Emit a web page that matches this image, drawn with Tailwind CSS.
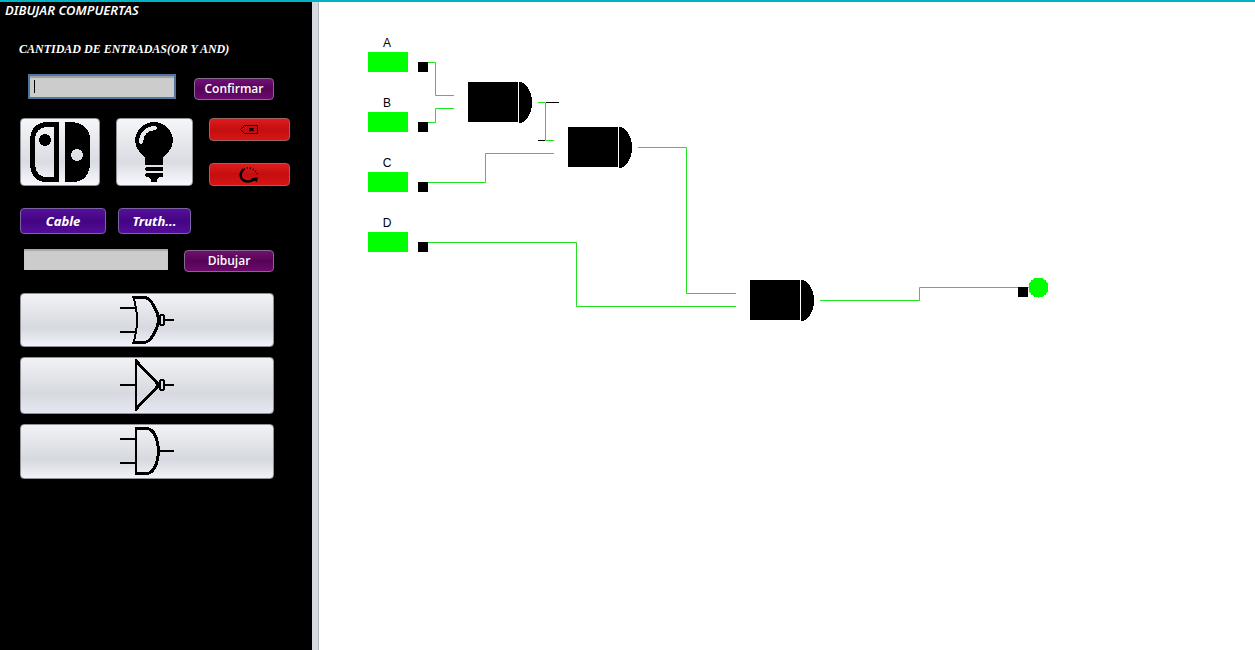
<!DOCTYPE html>
<html lang="es">
<head>
<meta charset="utf-8">
<title>Dibujar compuertas</title>
<script src="https://cdn.jsdelivr.net/npm/@tailwindcss/browser@4"></script>
</head>
<body class="flex h-screen overflow-hidden border-t-2 border-[#00b3c2] bg-white font-['Open_Sans',sans-serif]">
<aside class="w-[312px] shrink-0 bg-black pl-5 text-white">
  <h1 class="-ml-[15px] h-[17px] font-['Noto_Sans',sans-serif] text-[13px] leading-[17px] font-semibold italic">DIBUJAR COMPUERTAS</h1>
  <label for="entradas" class="mt-[22px] -ml-px block h-4 font-['Liberation_Serif',serif] text-[12px] leading-4 font-black italic whitespace-nowrap">CANTIDAD DE ENTRADAS(OR Y AND)</label>

  <div class="mt-[17px] ml-2 flex items-end gap-[18px]">
    <div class="relative mb-px">
      <input id="entradas" type="text" class="block h-[25px] w-[148px] border-2 border-[#51779f] bg-[#cccccc] px-1 text-[12px] text-black shadow-[inset_0_2px_1px_#9da0a4] outline-none">
      <span class="absolute top-[6px] left-[6px] h-[13px] w-px bg-black"></span>
    </div>
    <button class="h-[22px] w-20 rounded-[4px] border border-[#85688a] bg-linear-to-b from-[#701175] via-[#560459] to-[#6b0b70] font-['Open_Sans',sans-serif] text-[12px] leading-5 font-semibold">Confirmar</button>
  </div>

  <div class="mt-[18px] flex">
    <button aria-label="Interruptor" class="flex h-[68px] w-20 justify-center rounded-[4px] border border-[#8f9297] bg-linear-to-b from-[#f5f6f8] via-[#d9dce2] via-65% to-[#f8f9ff] pt-[3px]">
      <svg width="60" height="60" viewBox="0 0 60 60" shape-rendering="crispEdges">
        <path d="M26.500 2.500H17Q2.500 3.500 2.500 19V42Q3.500 57.500 17 57.500H26.500Z" fill="none" stroke="#000" stroke-width="5"/>
        <circle cx="15" cy="18" r="6"/>
        <path fill-rule="evenodd" d="M35 0H42Q60 2 60 18V43Q58 60 42 60H35ZM47 27a6 6 0 1 0 0 12a6 6 0 0 0 0-12Z"/>
      </svg>
    </button>
    <button aria-label="Bombilla" class="ml-4 flex h-[68px] w-[77px] justify-center rounded-[4px] border border-[#8f9297] bg-linear-to-b from-[#f5f6f8] via-[#d9dce2] via-65% to-[#f8f9ff] pt-[3px]">
      <svg width="39" height="60" viewBox="0 0 39 60" shape-rendering="crispEdges">
        <path d="M19 0A19 19 0 0 1 38 19C38 28 29 34 28 36V43H10V36C9 34 0 28 0 19A19 19 0 0 1 19 0Z"/>
        <path d="M6 20Q7 7 20 6" fill="none" stroke="#e8eaed" stroke-width="4" stroke-linecap="round"/>
        <path d="M11 45H27L28 46V48L27 49H11L10 48V46ZM11 51H27L28 52V54L27 55H24L22 58V60H16V58L14 55H11L10 54V52Z"/>
      </svg>
    </button>
    <div class="ml-4 flex w-[81px] flex-col justify-between">
      <button aria-label="Borrar" class="flex h-[23px] items-center justify-center rounded-[4px] border border-[#9b6264] bg-linear-to-b from-[#df1b1c] via-[#c40e0f] to-[#d81516]">
        <svg width="19" height="9" viewBox="0 0 19 9" fill="none" stroke="#000">
          <path d="M4.500 .5H17.500V8.500H4.500L.5 4.500Z"/><path d="M9.500 3L13.500 6M13.500 3L9.500 6" stroke-width="1.500"/>
        </svg>
      </button>
      <button aria-label="Reiniciar" class="flex h-[23px] items-center justify-center rounded-[4px] border border-[#9b6264] bg-linear-to-b from-[#df1b1c] via-[#c40e0f] to-[#d81516]">
        <svg width="21" height="16" viewBox="0 0 21 16" fill="none" stroke="#000">
          <path d="M4.500 2.500C1 5 1 9.500 3 12C6 15.500 12 15 15.500 12" stroke-width="2.500"/>
          <path d="M5 2C9 0 16 1 18 7" stroke-width="2" stroke-dasharray="1 2"/>
          <path d="M12 11L19 10.500L18 15L16 14Z" fill="#000" stroke="none"/>
        </svg>
      </button>
    </div>
  </div>

  <div class="mt-[22px] flex gap-3">
    <button class="h-[26px] w-[86px] rounded-[4px] border border-[#7963a0] bg-linear-to-b from-[#55109a] via-[#440582] to-[#540d9a] font-['Noto_Sans',sans-serif] text-[13px] leading-6 font-bold italic">Cable</button>
    <button class="h-[26px] w-[73px] rounded-[4px] border border-[#7963a0] bg-linear-to-b from-[#55109a] via-[#440582] to-[#540d9a] font-['Noto_Sans',sans-serif] text-[13px] leading-6 font-bold italic">Truth...</button>
  </div>

  <div class="mt-[15px] ml-1 flex items-start gap-4">
    <input type="text" aria-label="Expresión" class="block h-[21px] w-36 border-0 bg-[#cccccc] px-1 text-[12px] text-black shadow-[inset_0_2px_1px_#aaaaaa]">
    <button class="mt-px h-[22px] w-[90px] rounded-[4px] border border-[#85688a] bg-linear-to-b from-[#701170] via-[#560456] to-[#6b0b6b] font-['Open_Sans',sans-serif] text-[12px] leading-5 font-semibold">Dibujar</button>
  </div>

  <div class="mt-[21px] flex w-[254px] flex-col gap-[10px]">
    <button aria-label="NOR" class="flex h-[54px] items-center justify-center rounded-[4px] border border-[#8f9297] bg-linear-to-b from-[#f1f2f4] via-[#d6d9df] via-65% to-[#f0f2fc]">
      <svg width="54" height="50" viewBox="0 0 54 50" fill="none" stroke="#000" stroke-width="2" shape-rendering="crispEdges">
        <path d="M0 13H17M0 37H17M45 25H54"/>
        <path d="M13 1Q21 25 13 49"/><path d="M13 2.500H25C31 4 37 14 39 25C37 36 31 46 25 47.500H13" stroke-width="3"/>
        <ellipse cx="42" cy="25" rx="2.500" ry="5.500"/>
      </svg>
    </button>
    <button aria-label="NOT" class="flex h-[57px] items-center justify-center rounded-[4px] border border-[#8f9297] bg-linear-to-b from-[#f1f2f4] via-[#d6d9df] via-65% to-[#e6e8f2]">
      <svg width="54" height="53" viewBox="0 0 54 53" fill="none" stroke="#000" stroke-width="2" shape-rendering="crispEdges">
        <path d="M0 26H15M45 26H54M16 0V52"/><path d="M16 2L39 26L16 50" stroke-width="3"/>
        <ellipse cx="42" cy="26" rx="2.500" ry="5.500"/>
      </svg>
    </button>
    <button aria-label="AND" class="flex h-[55px] items-center justify-center rounded-[4px] border border-[#8f9297] bg-linear-to-b from-[#f1f2f4] via-[#d6d9df] via-65% to-[#f0f2f6]">
      <svg width="54" height="49" viewBox="0 0 54 49" fill="none" stroke="#000" stroke-width="2" shape-rendering="crispEdges">
        <path d="M0 12H16M0 36H16M39 24H54M16 0V48"/>
        <path d="M16 1.500H27C42 3 42 45 27 46.500H16" stroke-width="3"/>
      </svg>
    </button>
  </div>
</aside>
<div class="w-[7px] shrink-0 border-r border-[#b5b7bc] bg-[#d6d9df]"></div>
<main class="min-w-0 flex-1">
  <svg class="block h-full w-full overflow-hidden" role="img" aria-label="Circuito">
    <g transform="translate(-319 -2)">
      <g font-family="Liberation Sans, sans-serif" font-size="12" text-anchor="middle">
        <text x="387" y="47">A</text><text x="387" y="107">B</text><text x="387" y="167">C</text><text x="387" y="227">D</text>
      </g>
      <g fill="#00ff00" shape-rendering="crispEdges">
        <path d="M368 52h40v20h-40zM368 112h40v20h-40zM368 172h40v20h-40zM368 232h40v20h-40z"/>
      </g>
      <g fill="none" stroke="#22e022">
        <path d="M428 62.500H435.500V95.500H454M428 122.500H435.500V108.500H454M428 182.500H485.500V153.500H554M428 242.500H576.500V306.500H736M538 102.500H545.500V140.500H554M638 147.500H686.500V293.500H736M820 300.500H919.500V287.500H1029"/>
        <path d="M546 102.500H559M538 140.500H545" stroke="#000"/>
      </g>
      <g shape-rendering="crispEdges">
        <path d="M418 62h10v10h-10zM418 122h10v10h-10zM418 182h10v10h-10zM418 242h10v10h-10zM1018 287h10v10h-10z"/>
        <path d="M468 82h50v40h-50zM519 82a13 20.500 0 0 1 0 41z"/>
        <path d="M568 127h50v40h-50zM619 127a13 20.500 0 0 1 0 41z"/>
        <path d="M750 280h50v40h-50zM801 280a13 20.500 0 0 1 0 41z"/>
      </g>
      <circle cx="1038.500" cy="287.500" r="10" fill="#00ff00" shape-rendering="crispEdges"/>
    </g>
  </svg>
</main>
</body>
</html>
